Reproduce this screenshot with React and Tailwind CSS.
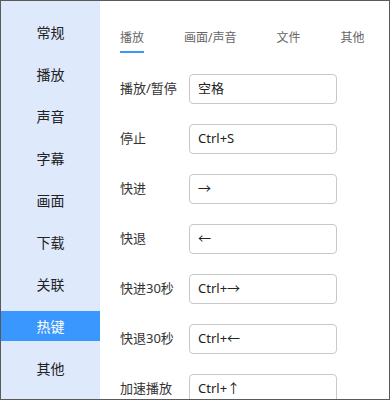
import React from 'react';

const menu = ['常规', '播放', '声音', '字幕', '画面', '下载', '关联', '热键', '其他'];
const tabs = ['播放', '画面/声音', '文件', '其他'];
const hotkeys = [
  { label: '播放/暂停', value: '空格' },
  { label: '停止', value: 'Ctrl+S' },
  { label: '快进', value: '→' },
  { label: '快退', value: '←' },
  { label: '快进30秒', value: 'Ctrl+→' },
  { label: '快退30秒', value: 'Ctrl+←' },
  { label: '加速播放', value: 'Ctrl+↑' },
];

const font = { fontFamily: '"Microsoft YaHei", "Noto Sans", "Noto Sans CJK SC", sans-serif' };

export default function App() {
  return (
    <div
      className="w-[390px] h-[400px] border border-[#5a5a5a] flex overflow-hidden bg-white"
      style={font}
    >
      {/* left menu */}
      <div className="w-[99px] shrink-0 bg-[#dee9fc] flex flex-col gap-[12px] pt-[16px]">
        {menu.map((item) => (
          <div
            key={item}
            className={`h-[30px] flex items-center justify-center text-[14px] ${
              item === '热键' ? 'bg-[#3a97fd] text-white' : 'text-[#222]'
            }`}
          >
            {item}
          </div>
        ))}
      </div>

      {/* content */}
      <div className="flex-1 pl-[20px] pt-[29px]">
        <div className="flex gap-[40px]">
          {tabs.map((tab, i) => (
            <div
              key={tab}
              className={`text-[12px] leading-[16px] pb-[5px] text-[#666] border-b-2 ${
                i === 0 ? 'border-[#3a97fd]' : 'border-transparent'
              }`}
            >
              {tab}
            </div>
          ))}
        </div>

        <div className="flex flex-col gap-[20px] mt-[21px]">
          {hotkeys.map((row) => (
            <div key={row.label} className="flex items-center h-[30px]">
              <div className="w-[69px] text-[13px] text-[#333]">{row.label}</div>
              <div className="w-[148px] h-[30px] border border-[#c8c8c8] rounded-[4px] flex items-center pl-[8px] text-[13px] text-[#222]">
                {row.value}
              </div>
            </div>
          ))}
        </div>
      </div>
    </div>
  );
}
